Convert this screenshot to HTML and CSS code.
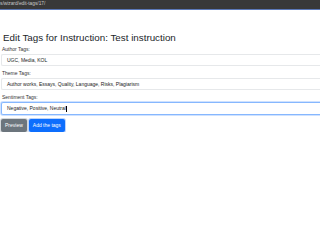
FILE: index.html
```html
<!DOCTYPE html>
<html>
<head>
<meta charset="utf-8">
<link rel="stylesheet" href="styles.css">
</head>
<body>
<div class="topbar"><span class="url">s/wizard/edit-tags/17/</span></div>
<main class="page">
  <h1 class="title">Edit Tags for Instruction: Test instruction</h1>
  <form class="form">
    <div class="field">
      <label class="label">Author Tags:</label>
      <div class="input">UGC, Media, KOL</div>
    </div>
    <div class="field">
      <label class="label">Theme Tags:</label>
      <div class="input">Author works, Essays, Quality, Language, Risks, Plagiarism</div>
    </div>
    <div class="field">
      <label class="label">Sentiment Tags:</label>
      <div class="input focus">Negative, Positive, Neutral<span class="caret"></span></div>
    </div>
    <div class="actions">
      <span class="btn btn-gray">Preview</span>
      <span class="btn btn-blue">Add the tags</span>
    </div>
  </form>
</main>
</body>
</html>
```
FILE: styles.css
```css
html, body {
  margin: 0;
  padding: 0;
  background: #fff;
  font-family: "Liberation Sans", Arial, sans-serif;
  color: #212529;
}
.topbar {
  height: 9px;
  background: #383838;
  border-bottom: 1px solid #5b78b8;
  display: flex;
  align-items: center;
  overflow: hidden;
}
.url {
  font-size: 4.8px;
  color: #c8c8c8;
  white-space: nowrap;
  line-height: 1;
}
.page {
  padding: 0 0 0 1px;
}
.title {
  font-size: 9.8px;
  font-weight: 400;
  margin: 22px 0 0 2px;
  line-height: 12px;
}
.form {
  margin-top: 2px;
  display: flex;
  flex-direction: column;
}
.field {
  display: flex;
  flex-direction: column;
  margin-bottom: 4px;
}
.label {
  font-size: 5px;
  line-height: 7px;
  color: #333;
  margin-left: 1px;
  margin-bottom: 1px;
}
.input {
  height: 12px;
  box-sizing: border-box;
  border: 1px solid #e6e8ea;
  border-right: none;
  border-radius: 2px 0 0 2px;
  font-size: 5px;
  line-height: 10px;
  padding-left: 5px;
  color: #222;
  white-space: nowrap;
}
.input.focus {
  border: 1px solid #86b7fe;
  border-right: none;
  box-shadow: 0 0 0 1px #cfe2ff;
  height: 13px;
  line-height: 11px;
}
.caret {
  display: inline-block;
  width: 0.6px;
  height: 6px;
  background: #000;
  vertical-align: middle;
}
.actions {
  display: flex;
  gap: 2px;
  margin-top: 0px;
}
.btn {
  font-size: 5px;
  line-height: 13px;
  height: 13px;
  padding: 0 4px;
  border-radius: 2px;
  color: #fff;
}
.btn-gray {
  background: #6c757d;
  box-shadow: 0 0 0 1px #d5d8db;
}
.btn-blue {
  background: #0d6efd;
  box-shadow: 0 0 0 1px #bcd4fb;
}
```
